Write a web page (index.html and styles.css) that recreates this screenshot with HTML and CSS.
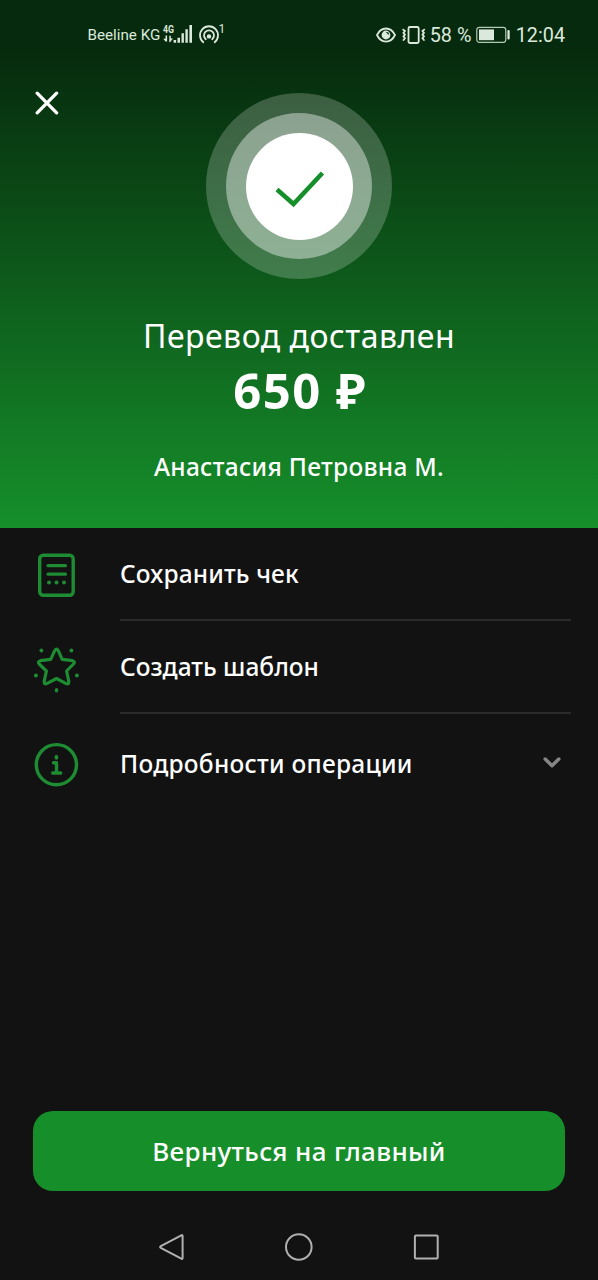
FILE: index.html
```html
<!DOCTYPE html>
<html lang="ru">
<head>
<meta charset="utf-8">
<title>Перевод доставлен</title>
<link rel="stylesheet" href="styles.css">
</head>
<body>
<div class="screen">
  <header class="hero">
    <div class="status">
      <div class="status-left">
        <span class="carrier">Beeline KG</span>
        <svg class="signal" width="31" height="22" viewBox="0 0 31 22">
          <text class="net" x="0" y="9" textLength="11" lengthAdjust="spacingAndGlyphs">4G</text>
          <path class="fill" d="M2.5 11.5h1.6v6H2.5L.2 14.8h2.3zM6.3 11.8h1.5v2.7H10l-3 3.7h-.7zM10.6 16h2.5v2.7h-2.5zM14.5 13.7H17v5h-2.5zM18.5 9.3h2.4v9.4h-2.4zM22.4 5.2h2.4v13.5h-2.4zM26.4 1h2.6v17.7h-2.6z"/>
        </svg>
        <svg class="hotspot" width="22" height="24" viewBox="0 0 22 24">
          <g class="line">
            <path d="M5.3 19.2A9 9 0 1 1 16.7 19.2"/>
            <path d="M7.8 16.2A5 5 0 1 1 14.2 16.2"/>
          </g>
          <circle class="fill" cx="11" cy="13.4" r="2.2"/>
        </svg>
        <span class="sup">1</span>
      </div>
      <div class="status-right">
        <svg width="20" height="16" viewBox="0 0 20 16">
          <path class="line" d="M1 8C5.2-.7 14.8-.7 19 8 14.8 16.7 5.2 16.7 1 8z"/>
          <circle class="fill" cx="10" cy="8" r="4.4"/>
          <path class="dark" d="M10.4 5.3a2.4 2.4 0 0 1 2.2 2.2"/>
        </svg>
        <svg class="vibrate" width="24" height="20" viewBox="0 0 24 20">
          <rect class="line" x="6.500" y="2" width="10.200" height="16" rx="1.500"/>
          <path class="line" d="M1.200 4.600L3 6 1.400 7.800 3 9.600 1.400 11.400 3 13.200 1.500 15M22.200 4.600L20.400 6 22 7.800 20.400 9.600 22 11.400 20.400 13.200 21.900 15"/>
        </svg>
        <span class="percent">58 %</span>
        <svg class="battery" width="35" height="18" viewBox="0 0 35 18">
          <rect class="thin" x=".8" y="1.3" width="29" height="15" rx="2.5"/>
          <rect class="fill" x="3" y="3.4" width="15" height="10.8"/>
          <rect class="fill" x="31.4" y="4" width="2.3" height="9.6" rx="1"/>
        </svg>
        <span class="clock">12:04</span>
      </div>
    </div>
    <div class="stage">
      <svg class="close" width="24" height="24" viewBox="0 0 24 24"><path d="M2.2 2.2l19.400 19.600M21.600 2.200L2.200 21.800"/></svg>
      <div class="ring-outer"><div class="ring-inner"><div class="disc">
        <svg width="50" height="40" viewBox="0 0 50 40"><path d="M2 19.500L18.500 34 47.500 3"/></svg>
      </div></div></div>
    </div>
    <h1 class="title">Перевод доставлен</h1>
    <div class="amount">650 ₽</div>
    <div class="person">Анастасия Петровна М.</div>
  </header>
  <main class="actions">
    <div class="row">
      <div class="icon"><svg width="46" height="46" viewBox="0 0 46 46">
        <rect x="6.700" y="3.200" width="33.500" height="40" rx="3.500"/>
        <path d="M15 13.700h17.500M15 22.200h17.500" stroke-width="3.200"/>
        <g class="dot"><circle cx="16" cy="30.500" r="2"/><circle cx="23.500" cy="30.500" r="2"/><circle cx="31" cy="30.500" r="2"/></g>
      </svg></div>
      <div class="label save">Сохранить чек</div>
    </div>
    <div class="row">
      <div class="icon template-icon"><svg width="46" height="48" viewBox="0 0 46 48">
        <path d="M21.700 4.700Q23.500 1.500 25.300 4.700L29.200 13.400 39.500 14.700Q42.700 15.700 40.500 18L33.600 25 35.800 35.300Q36 39 32.700 37.400L23.500 32.500 14.200 37.400Q10.900 39 11.200 35.300L13.400 25 6.200 18Q4.200 15.700 7.400 14.700L17.700 13.400Z" stroke-width="3.200"/>
        <g class="dot"><circle cx="8.400" cy="4.500" r="1.900"/><circle cx="38.400" cy="4.500" r="1.900"/><circle cx="2.900" cy="29.500" r="2"/><circle cx="43.900" cy="29.500" r="2"/><ellipse cx="23.500" cy="44.200" rx="1.700" ry="2.300"/></g>
      </svg></div>
      <div class="label template">Создать шаблон</div>
    </div>
    <div class="row last">
      <div class="icon"><svg width="46" height="46" viewBox="0 0 46 46">
        <circle cx="23.400" cy="22.700" r="20.100"/>
        <path d="M20.500 20.700h3v10.300M19.700 31h8" stroke-width="3.400"/>
        <ellipse class="dot" cx="23.400" cy="15.300" rx="1.900" ry="2.500"/>
      </svg></div>
      <div class="label details">Подробности операции
        <svg class="chevron" width="20" height="14" viewBox="0 0 20 14"><path d="M3.200 3L10 9.700 16.800 3"/></svg>
      </div>
    </div>
  </main>
  <button class="home">Вернуться на главный</button>
  <nav class="nav">
    <svg width="28" height="30" viewBox="0 0 28 30"><path d="M24.300 3.300Q25.600 2.600 25.600 4V26Q25.600 27.400 24.300 26.700L3.800 15.800Q2.500 15 3.800 14.200Z"/></svg>
    <svg width="30" height="30" viewBox="0 0 30 30"><circle cx="15.800" cy="15" r="12.800"/></svg>
    <svg width="28" height="30" viewBox="0 0 28 30"><rect x="2.900" y="3.600" width="22.800" height="22.800" rx="1"/></svg>
  </nav>
</div>
</body>
</html>
```
FILE: styles.css
```css
* { box-sizing: border-box; }
body { margin: 0; background: #121212; color: #fff; font-family: "Noto Sans", sans-serif; }
svg { display: block; flex: none; fill: none; }
.screen { width: 598px; height: 1280px; display: flex; flex-direction: column; background: #121212; }
.hero { height: 528px; flex: none; background: linear-gradient(#062a0d 0, #062a0d 50px, #168f2b 528px); display: flex; flex-direction: column; align-items: center; }

.status { width: 100%; height: 70px; padding: 0 33px 0 87.500px; display: flex; justify-content: space-between; align-items: center; font-family: Roboto, sans-serif; color: #dbe8dc; white-space: nowrap; }
.status-left, .status-right { display: flex; align-items: center; }
.carrier { font-size: 15.200px; width: 75px; }
.net { font: bold 10px Roboto, sans-serif; fill: #dbe8dc; }
.sup { font-size: 12px; line-height: 14px; padding-bottom: 12px; margin-left: -1px; }
.hotspot { margin-left: 4px; }
.line { fill: none; stroke: #dbe8dc; stroke-width: 1.800; stroke-linecap: round; stroke-linejoin: round; }
.thin { stroke: #b5c9b7; stroke-width: 1.200; }
.fill { fill: #dbe8dc; }
.dark { stroke: #062a0d; stroke-width: 1.200; }
.vibrate { margin-left: 6px; }
.percent { font-size: 19.800px; width: 46px; margin-left: 4px; }
.clock { font-size: 19.800px; margin-left: 5px; }

.stage { width: 100%; height: 232px; padding: 23px 206px 0 34.500px; display: flex; justify-content: space-between; align-items: flex-start; }
.close { margin-top: -2px; }
.close path { stroke: #fff; stroke-width: 3.300; stroke-linecap: round; }
.ring-outer, .ring-inner, .disc { border-radius: 50%; display: grid; place-items: center; }
.ring-outer { width: 186px; height: 186px; background: rgba(255,255,255,.21); }
.ring-inner { width: 146px; height: 146px; background: rgba(255,255,255,.41); }
.disc { width: 107px; height: 107px; background: #fff; padding: 7px 0 0 2px; }
.disc path { stroke: #168f2b; stroke-width: 4.500; }

.title { margin: 13px 0 0; font-size: 32px; font-weight: 400; line-height: 42px; letter-spacing: .5px; }
.amount { margin-top: 3px; font-size: 49px; font-weight: 700; line-height: 60px; letter-spacing: 1.500px; padding-left: 2px; }
.person { margin-top: 31px; font-size: 24.500px; font-weight: 500; line-height: 32px; letter-spacing: .3px; }

.actions { flex: 1; padding-right: 27px; }
.row { display: flex; height: 93px; }
.row.last { height: 101px; }
.icon { width: 120px; padding-left: 33px; display: flex; align-items: center; }
.template-icon { padding-top: 4px; }
.label { flex: 1; display: flex; align-items: center; justify-content: space-between; padding: 0 9px 1px 0; font-size: 24.500px; font-weight: 500; white-space: nowrap; border-bottom: 2px solid #2b2b2b; }
.save { letter-spacing: .15px; }
.template { letter-spacing: 0; }
.details { letter-spacing: .25px; padding-bottom: 3px; }
.last .label { border: 0; }
.chevron path { stroke: #858585; stroke-width: 3.500; stroke-linecap: round; stroke-linejoin: round; }

.home { margin: 0 33px; height: 80px; flex: none; border: 0; border-radius: 20px; background: #168f2b; color: #fff; font: 500 26px "Noto Sans", sans-serif; letter-spacing: .35px; }
.nav { height: 89px; flex: none; padding: 23px 158.500px 0 157px; display: flex; justify-content: space-between; align-items: center; }
.nav path, .nav circle, .nav rect { stroke: #b0b0b0; stroke-width: 2; }
.icon svg { stroke: #1d8c32; stroke-width: 3.400; stroke-linecap: round; stroke-linejoin: round; }
.icon .dot { fill: #1d8c32; stroke: none; }
```
